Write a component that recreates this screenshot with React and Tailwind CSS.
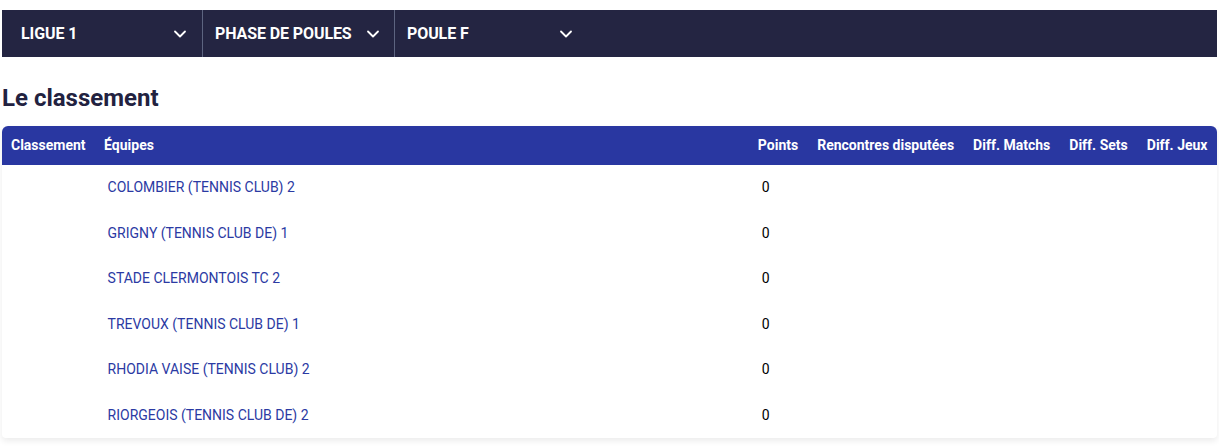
import { ChevronDown } from "lucide-react";

const teams = [
  "COLOMBIER (TENNIS CLUB) 2",
  "GRIGNY (TENNIS CLUB DE) 1",
  "STADE CLERMONTOIS TC 2",
  "TREVOUX (TENNIS CLUB DE) 1",
  "RHODIA VAISE (TENNIS CLUB) 2",
  "RIORGEOIS (TENNIS CLUB DE) 2",
];

const columns = ["Points", "Rencontres disputées", "Diff. Matchs", "Diff. Sets", "Diff. Jeux"];

function Select({ label, className }) {
  return (
    <div className={"flex items-center justify-between h-full border-r border-[#5d6480] " + className}>
      <span className="font-bold text-[16px] tracking-[-0.1px] text-white uppercase whitespace-nowrap">{label}</span>
      <ChevronDown className="w-[20px] h-[20px] shrink-0 text-white" strokeWidth={2.2} />
    </div>
  );
}

export default function App() {
  return (
    <div className="px-[2px] pt-[10px] bg-white min-h-screen" style={{ fontFamily: "Roboto, 'Liberation Sans', sans-serif" }}>
      <div className="flex h-[47px] bg-[#242542]">
        <Select label="Ligue 1" className="w-[201px] pl-[19px] pr-[12px]" />
        <Select label="Phase de poules" className="w-[192px] pl-3 pr-[11px] gap-2" />
        <Select label="Poule F" className="w-[192px] pl-3 pr-[11px] border-r-0" />
      </div>

      <h2 className="mt-[27px] mb-[14px] text-[24px] leading-[28px] font-bold text-[#222240]">Le classement</h2>

      <div className="rounded-t-[6px] rounded-b-[4px] bg-white shadow-[0_3px_6px_rgba(0,0,0,0.08)] overflow-hidden">
        <table className="w-full border-collapse">
          <thead>
            <tr className="h-[39px] bg-[#2937a1] text-white text-[14px] font-bold text-left">
              <th className="px-[9px] whitespace-nowrap">Classement</th>
              <th className="px-[9.5px] w-full">Équipes</th>
              {columns.map((c) => (
                <th key={c} className="px-[9.5px] whitespace-nowrap">{c}</th>
              ))}
            </tr>
          </thead>
          <tbody>
            {teams.map((t) => (
              <tr key={t} className="h-[45.5px] text-[14px]">
                <td></td>
                <td className="pl-[13px] text-[#2b3aa3] whitespace-nowrap">{t}</td>
                <td className="pl-[13.5px] text-black">0</td>
                <td></td>
                <td></td>
                <td></td>
                <td></td>
              </tr>
            ))}
          </tbody>
        </table>
      </div>
    </div>
  );
}
